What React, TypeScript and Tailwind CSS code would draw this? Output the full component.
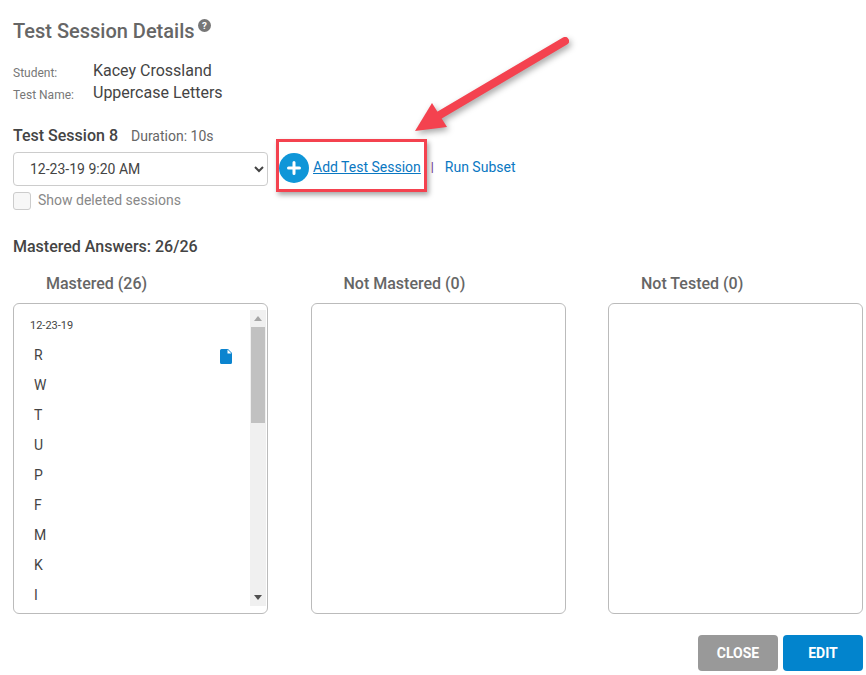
const letters = ["R", "W", "T", "U", "P", "F", "M", "K", "I"];

function Column({ title, children }: { title: string; children?: React.ReactNode }) {
  return (
    <div className="w-[255px]">
      <div className="pl-[33px] h-[20px] leading-[20px] text-[16px] font-medium text-[#666]">{title}</div>
      <div className="mt-[9px] h-[311px] rounded-[6px] border border-[#bbb] overflow-hidden">{children}</div>
    </div>
  );
}

function DocIcon() {
  return (
    <svg width="12" height="15" viewBox="0 0 12 15" className="mt-[2px]">
      <path d="M1.5 0H8L12 4V13.5A1.5 1.5 0 0 1 10.5 15H1.5A1.5 1.5 0 0 1 0 13.5V1.5A1.5 1.5 0 0 1 1.5 0Z" fill="#0b84cf" />
      <path d="M7.5 0.5L11.5 4.5H7.5Z" fill="#fff" />
    </svg>
  );
}

function MasteredList() {
  return (
    <div className="flex h-full pt-[6px] pb-[7px] pr-px">
      <div className="flex-1 overflow-hidden pl-[16px]">
        <div className="h-[30px] pt-[8px] leading-[16px] text-[11px] text-[#444]">12-23-19</div>
        {letters.map((l, i) => (
          <div key={l} className="flex h-[30px] items-center justify-between pl-[4px] pr-[18px] text-[14px] text-[#444]">
            <span>{l}</span>
            {i === 0 && <DocIcon />}
          </div>
        ))}
      </div>
      <div className="flex w-[16px] flex-col bg-[#f0f0f0]">
        <div className="flex h-[17px] items-center justify-center">
          <div className="h-0 w-0 border-x-[4px] border-b-[5px] border-x-transparent border-b-[#a6a6a6]" />
        </div>
        <div className="mx-px h-[96px] bg-[#c1c1c1]" />
        <div className="flex-1" />
        <div className="flex h-[17px] items-center justify-center">
          <div className="h-0 w-0 border-x-[4px] border-t-[5px] border-x-transparent border-t-[#505050]" />
        </div>
      </div>
    </div>
  );
}

export default function App() {
  return (
    <div className="relative h-[675px] w-[866px] overflow-hidden bg-white font-['Roboto',sans-serif]">
      <div className="pl-[13px] pr-[3px] pt-[19px]">
        <div className="flex h-[24px] items-start">
          <h1 className="text-[20px] leading-[24px] font-medium text-[#666]">Test Session Details</h1>
          <svg width="13" height="13" viewBox="0 0 14 14" className="ml-[3px] mt-0">
            <circle cx="7" cy="7" r="7" fill="#777" />
            <text x="7" y="11" textAnchor="middle" fontSize="10.5" fontWeight="700" fill="#fff">?</text>
          </svg>
        </div>

        <div className="mt-[17px] flex h-[22px] items-center">
          <span className="w-[80px] pt-[3px] text-[12px] text-[#777]">Student:</span>
          <span className="text-[16px] text-[#444]">Kacey Crossland</span>
        </div>
        <div className="flex h-[22px] items-center">
          <span className="w-[80px] pt-[3px] text-[12px] text-[#777]">Test Name:</span>
          <span className="text-[16px] text-[#444]">Uppercase Letters</span>
        </div>

        <div className="mt-[22px] flex h-[20px] items-center">
          <span className="text-[16px] font-medium text-[#444]">Test Session 8</span>
          <span className="ml-[13px] text-[14px] text-[#666]">Duration: 10s</span>
        </div>

        <div className="mt-[6px] flex items-start">
          <div className="w-[255px]">
            <select className="h-[34px] w-full rounded-[4px] border border-[#ccc] bg-white pl-[12px] text-[14px] text-[#444]">
              <option>12-23-19 9:20 AM</option>
            </select>
            <div className="mt-[6px] flex h-[18px] items-start">
              <div className="h-[18px] w-[18px] rounded-[3px] border border-[#ccc] bg-[#f7f7f7]" />
              <span className="ml-[7px] text-[14px] leading-[16px] text-[#888]">Show deleted sessions</span>
            </div>
          </div>
          <div className="ml-[11px] flex h-[32px] items-center">
            <div className="flex h-[30px] w-[30px] items-center justify-center rounded-full bg-[#0f96d8]">
              <svg width="16" height="16" viewBox="0 0 16 16">
                <path d="M8 2.5V13.5M2.5 8H13.5" stroke="#fff" strokeWidth="3" strokeLinecap="round" />
              </svg>
            </div>
            <a className="ml-[4px] mb-[2px] text-[14px] text-[#0a78c2] underline">Add Test Session</a>
            <span className="ml-[10px] mb-[2px] text-[12px] font-medium text-[#6b2f8c]">|</span>
            <a className="ml-[11px] mb-[2px] text-[14px] text-[#0a78c2]">Run Subset</a>
          </div>
        </div>

        <div className="mt-[27px] h-[20px] text-[16px] leading-[20px] font-medium text-[#444]">Mastered Answers: 26/26</div>

        <div className="mt-[17px] flex justify-between">
          <Column title="Mastered (26)">
            <MasteredList />
          </Column>
          <Column title="Not Mastered (0)" />
          <Column title="Not Tested (0)" />
        </div>

        <div className="mt-[21px] flex justify-end gap-[5px]">
          <button className="h-[36px] w-[80px] rounded-[4px] bg-[#999] text-[14px] font-bold text-white">CLOSE</button>
          <button className="h-[36px] w-[80px] rounded-[4px] bg-[#0284cd] text-[14px] font-bold text-white">EDIT</button>
        </div>
      </div>

      {/* annotation box + arrow */}
      <div className="absolute left-[276px] top-[139px] h-[53px] w-[151px] border-[3px] border-[#f4424f] shadow-[2px_3px_5px_rgba(0,0,0,0.35)]" />
      <svg width="866" height="675" className="pointer-events-none absolute left-0 top-0 drop-shadow-[2px_3px_3px_rgba(0,0,0,0.35)]">
        <path d="M565 41L438 116" stroke="#f4424f" strokeWidth="8" strokeLinecap="round" />
        <path d="M415 131L432 103L447 127Z" fill="#f4424f" />
      </svg>
    </div>
  );
}
